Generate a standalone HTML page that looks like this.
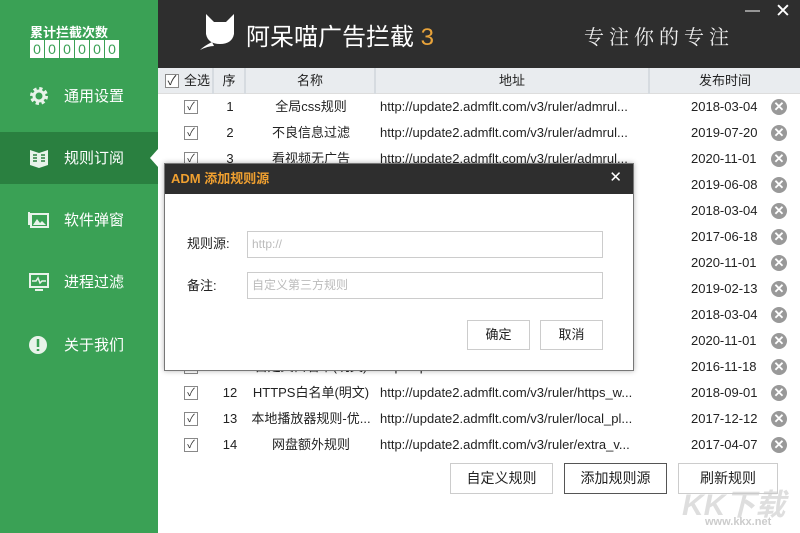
<!DOCTYPE html>
<html><head><meta charset="utf-8"><style>
*{margin:0;padding:0;box-sizing:border-box}
body{width:800px;height:533px;overflow:hidden;position:relative;background:#fff;font-family:"Liberation Sans","Noto Sans CJK SC",sans-serif;font-size:13px;color:#222}
.side{position:absolute;left:0;top:0;width:158px;height:533px;background:#3aa155}
.abs{position:absolute}
.cnt{left:30px;top:22px;color:#fff;font-size:13px;font-weight:bold}
.digits{left:30px;top:40px;display:flex;gap:1px}
.digits span{width:14px;height:18px;background:#fff;color:#3aa155;font-size:14px;text-align:center;line-height:18px}
.item{position:absolute;left:0;width:158px;height:52px;color:#fff;font-size:15px}
.item .t{position:absolute;left:64px;top:15px}
.item .ic{position:absolute;left:28px;top:15px;width:22px;height:22px}
.top{position:absolute;left:158px;top:0;width:642px;height:68px;background:#2e2e2e}
.hdr{position:absolute;left:158px;top:68px;width:642px;height:26px;background:#e9ecef;border-bottom:1px solid #ddd}
.hdr div{position:absolute;top:0;height:26px;line-height:26px;text-align:center;font-size:13px;border-right:2px solid #d6dbe0}
.row{position:absolute;left:158px;width:642px;height:26px;font-size:13px}
.row div{position:absolute;top:0;line-height:26px;white-space:nowrap}
.cb{width:14px;height:14px;border:1px solid #888;background:#fff;top:6px!important;font-size:11px;line-height:12px!important;text-align:center;color:#333}
.x{width:16px;height:16px;border-radius:50%;background:#999;color:#fff;top:5px!important;font-size:13px;line-height:16px!important;text-align:center;font-weight:bold}
.btn{position:absolute;border:1px solid #ccc;background:#fff;text-align:center;font-size:14px}
.dlg{position:absolute;left:164px;top:163px;width:470px;height:208px;background:#fff;border:1px solid #777;box-shadow:0 0 5px rgba(0,0,0,.3)}
</style></head><body>
<div class="side">
<div class="abs cnt">累计拦截次数</div>
<div class="abs digits"><span>0</span><span>0</span><span>0</span><span>0</span><span>0</span><span>0</span></div>
<div class="item" style="top:70px"><svg class="ic" viewBox="0 0 22 22"><circle cx="11" cy="11" r="7" fill="none" stroke="#e8f3ea" stroke-width="4" stroke-dasharray="3 2.5"/><circle cx="11" cy="11" r="5" fill="none" stroke="#e8f3ea" stroke-width="3"/></svg><span class="t">通用设置</span></div>
<div class="item" style="top:132px;background:#2a8040"><svg class="ic" viewBox="0 0 22 22"><path d="M2 3 L11 6 L20 3 V18 L11 21 L2 18Z" fill="#e8f3ea"/><path d="M5 8h4M5 11h4M5 14h4M13 8h4M13 11h4M13 14h4" stroke="#2a8040" stroke-width="1.5"/></svg><span class="t">规则订阅</span>
<div style="position:absolute;right:0;top:17px;width:0;height:0;border-top:9px solid transparent;border-bottom:9px solid transparent;border-right:8px solid #fff"></div></div>
<div class="item" style="top:194px"><svg class="ic" viewBox="0 0 22 22"><rect x="3" y="5" width="17" height="13" fill="none" stroke="#e8f3ea" stroke-width="2"/><path d="M5 16 L9 10 L12 14 L14 12 L18 16Z" fill="#e8f3ea"/><path d="M1 3 V16" stroke="#e8f3ea" stroke-width="2"/></svg><span class="t">软件弹窗</span></div>
<div class="item" style="top:256px"><svg class="ic" viewBox="0 0 22 22"><rect x="2" y="3" width="18" height="13" fill="none" stroke="#e8f3ea" stroke-width="2"/><path d="M4 10h4l2-3 2 5 2-2h4" fill="none" stroke="#e8f3ea" stroke-width="1.5"/><path d="M7 19h8" stroke="#e8f3ea" stroke-width="2"/></svg><span class="t">进程过滤</span></div>
<div class="item" style="top:319px"><svg class="ic" viewBox="0 0 22 22"><circle cx="10" cy="11" r="9" fill="#e8f3ea"/><path d="M10 5v8M10 15v2" stroke="#3aa155" stroke-width="2.5"/></svg><span class="t">关于我们</span></div>
</div>
<div class="top">
<svg class="abs" style="left:40px;top:12px" width="44" height="40" viewBox="0 0 44 40"><path d="M8 2 L16 10 H28 L36 2 L36 22 Q34 32 22 32 Q10 32 8 22Z" fill="#fff"/><path d="M14 30 Q6 34 2 38 Q10 34 16 34Z" fill="#fff"/></svg>
<div class="abs" style="left:88px;top:17px;color:#fff;font-size:24px">阿呆喵广告拦截 <span style="color:#e8a33a">3</span></div>
<div class="abs" style="left:426px;top:21px;color:#eee;font-size:20px;letter-spacing:5px;font-family:'Noto Serif CJK SC',serif">专注你的专注</div>
<div class="abs" style="left:587px;top:2px;color:#fff;font-size:15px">—</div>
<div class="abs" style="left:617px;top:0px;color:#fff;font-size:19px">✕</div>
</div>
<div class="hdr">
<div style="left:0;width:56px;text-align:right;padding-right:2px">全选</div>
<div class="cb" style="position:absolute;left:7px;width:14px;height:14px;border:1px solid #888;top:6px;line-height:12px">✓</div>
<div style="left:56px;width:32px">序</div>
<div style="left:88px;width:130px">名称</div>
<div style="left:218px;width:274px">地址</div>
<div style="left:492px;width:150px;border:none">发布时间</div>
</div>
<div id="rows"></div>
<script>
var d=[["1","全局css规则","admrul...","2018-03-04"],["2","不良信息过滤","admrul...","2019-07-20"],["3","看视频无广告","admrul...","2020-11-01"],["4","","","2019-06-08"],["5","","","2018-03-04"],["6","","","2017-06-18"],["7","","","2020-11-01"],["8","","","2019-02-13"],["9","","","2018-03-04"],["10","","","2020-11-01"],["11","自定义白名单(明文)","admwhi...","2016-11-18"],["12","HTTPS白名单(明文)","https_w...","2018-09-01"],["13","本地播放器规则-优...","local_pl...","2017-12-12"],["14","网盘额外规则","extra_v...","2017-04-07"]];
var h="";d.forEach(function(r,i){h+='<div class="row" style="top:'+(94+i*26)+'px"><div class="cb" style="left:26px">✓</div><div style="left:56px;width:32px;text-align:center">'+r[0]+'</div><div style="left:88px;width:130px;text-align:center;overflow:hidden">'+r[1]+'</div><div style="left:222px">http://update2.admflt.com/v3/ruler/'+r[2]+'</div><div style="left:533px">'+r[3]+'</div><div class="x" style="left:613px">✕</div></div>'});
document.getElementById("rows").innerHTML=h;
</script>
<div class="btn" style="left:450px;top:463px;width:103px;height:31px;line-height:29px">自定义规则</div>
<div class="btn" style="left:564px;top:463px;width:103px;height:31px;line-height:29px;border-color:#555">添加规则源</div>
<div class="btn" style="left:678px;top:463px;width:100px;height:31px;line-height:29px">刷新规则</div>
<div class="abs" style="left:682px;top:480px;color:rgba(200,200,200,.6);font-size:30px;font-weight:bold;font-style:italic">KK下载</div>
<div class="abs" style="left:705px;top:516px;color:#ccc;font-size:11px;font-weight:bold">www.kkx.net</div>
<div class="dlg">
<div style="height:30px;background:#2e2e2e;color:#f0a030;font-weight:bold;font-size:13px;line-height:30px;padding-left:6px">ADM 添加规则源</div>
<div class="abs" style="right:11px;top:4px;color:#fff;font-size:15px">✕</div>
<div class="abs" style="left:22px;top:69px;font-size:13px">规则源:</div>
<div class="abs" style="left:82px;top:67px;width:356px;height:27px;border:1px solid #ccc;color:#bbb;font-size:12px;line-height:25px;padding-left:4px">http://</div>
<div class="abs" style="left:22px;top:111px;font-size:13px">备注:</div>
<div class="abs" style="left:82px;top:108px;width:356px;height:27px;border:1px solid #ccc;color:#bbb;font-size:12px;line-height:25px;padding-left:4px">自定义第三方规则</div>
<div class="btn" style="left:302px;top:156px;width:63px;height:30px;line-height:28px;font-size:13px">确定</div>
<div class="btn" style="left:375px;top:156px;width:63px;height:30px;line-height:28px;font-size:13px">取消</div>
</div>
</body></html>
